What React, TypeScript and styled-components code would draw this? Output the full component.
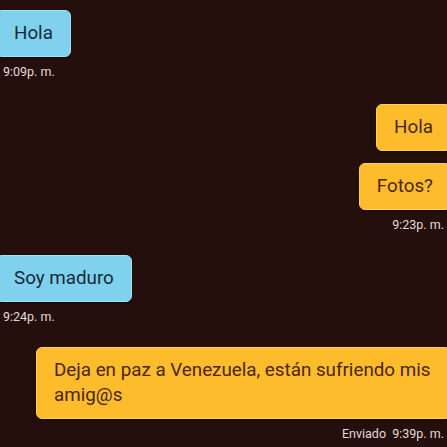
import React from "react";
import styled, { createGlobalStyle } from "styled-components";

const Global = createGlobalStyle`
  html, body {
    margin: 0;
    padding: 0;
    background: #240f0d;
    overflow: hidden;
  }
`;

const Screen = styled.div`
  width: 447px;
  height: 447px;
  box-sizing: border-box;
  padding-top: 10px;
  background: #240f0d;
  display: flex;
  flex-direction: column;
  overflow: hidden;
  font-family: Roboto, "Liberation Sans", sans-serif;
`;

type Side = "in" | "out";

const Group = styled.div<{ $side: Side; $top: number }>`
  display: flex;
  flex-direction: column;
  align-items: ${(p) => (p.$side === "in" ? "flex-start" : "flex-end")};
  gap: 12px;
  margin-top: ${(p) => p.$top}px;
`;

const Bubble = styled.div<{ $side: Side; $wide?: boolean }>`
  box-sizing: border-box;
  width: ${(p) => (p.$wide ? "415px" : "auto")};
  padding: 10px 17px;
  font-size: 18.8px;
  line-height: 25px;
  border-radius: 6px;
  border: 1px solid ${(p) => (p.$side === "in" ? "#a6e2f6" : "#ffd05a")};
  background: ${(p) => (p.$side === "in" ? "#80d1ee" : "#fdbc2c")};
  color: ${(p) => (p.$side === "in" ? "#17293a" : "#4b2510")};
  margin-left: ${(p) => (p.$side === "in" ? "-4px" : "0")};
  margin-right: ${(p) => (p.$side === "out" ? "-4px" : "0")};
  box-shadow: 0 1px 2px rgba(0, 0, 0, 0.5);
`;

const Meta = styled.div`
  font-size: 12.5px;
  line-height: 14px;
  color: #e2dad7;
  margin-top: -4px;
  padding: 0 3px;
  white-space: pre;
`;

export default function App() {
  return (
    <>
      <Global />
      <Screen>
        <Group $side="in" $top={0}>
          <Bubble $side="in">Hola</Bubble>
          <Meta>9:09p. m.</Meta>
        </Group>
        <Group $side="out" $top={25}>
          <Bubble $side="out">Hola</Bubble>
          <Bubble $side="out">Fotos?</Bubble>
          <Meta>9:23p. m.</Meta>
        </Group>
        <Group $side="in" $top={23}>
          <Bubble $side="in">Soy maduro</Bubble>
          <Meta>9:24p. m.</Meta>
        </Group>
        <Group $side="out" $top={23}>
          <Bubble $side="out" $wide>
            Deja en paz a Venezuela, están sufriendo mis amig@s
          </Bubble>
          <Meta>{"Enviado  9:39p. m."}</Meta>
        </Group>
      </Screen>
    </>
  );
}
